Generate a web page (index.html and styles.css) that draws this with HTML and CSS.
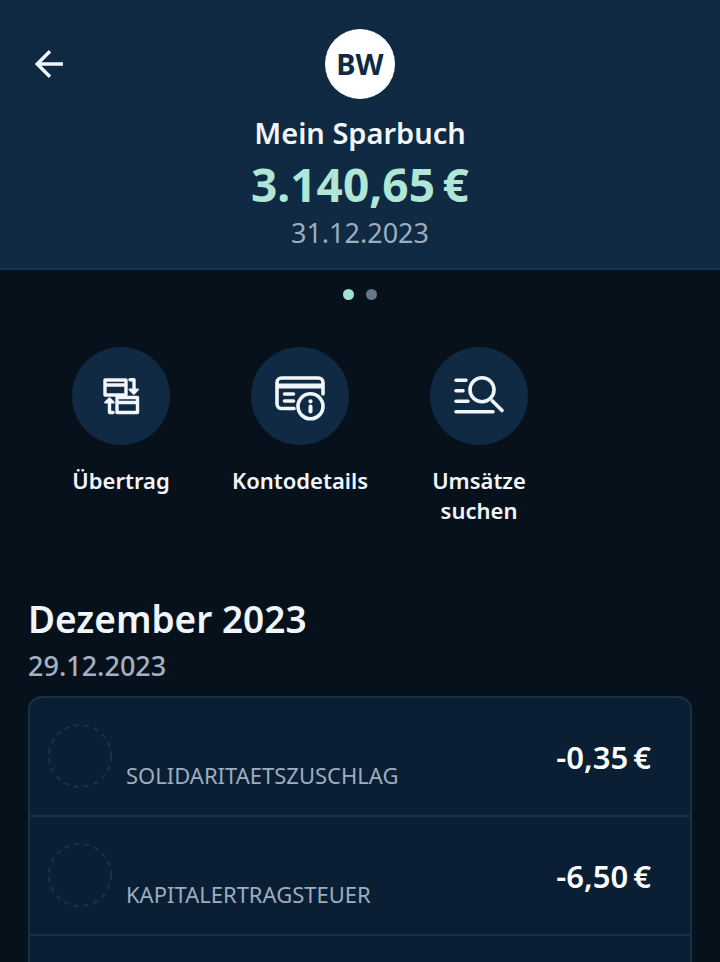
FILE: index.html
```html
<!DOCTYPE html>
<html lang="de">
<head>
<meta charset="utf-8">
<meta name="viewport" content="width=device-width, initial-scale=1">
<title>Mein Sparbuch</title>
<link rel="stylesheet" href="styles.css">
</head>
<body>
<header class="header">
  <button class="back" type="button" aria-label="Zurück">
    <svg width="32" height="32" viewBox="0 0 32 32" fill="none" stroke="currentColor" stroke-width="3.4"><path d="M31 16H6M18 3.200 5.200 16 18 28.800"/></svg>
  </button>
  <div class="account">
    <div class="avatar">BW</div>
    <h1 class="account-name">Mein Sparbuch</h1>
    <div class="balance">3.140,65&#8201;€</div>
    <div class="balance-date">31.12.2023</div>
  </div>
</header>
<main class="main">
  <div class="dots"><span class="dot dot-active"></span><span class="dot"></span></div>
  <nav class="actions">
    <button class="action" type="button">
      <span class="action-icon">
        <svg width="40" height="40" viewBox="0 0 40 40" fill="none" stroke="currentColor" stroke-width="3.4" stroke-linejoin="round" stroke-linecap="round">
          <path d="M4 4h21v15H4zM4 9h21"/>
          <path d="M16 21.500h20.500V36.500H16zM16 26.500h20.500"/>
          <path d="M29 3.800h4V13"/><path d="M12 36.500H8.500V27"/>
          <path d="M28.500 13.500h8.500L32.800 17.800zM4.200 26.500h8.500L8.500 22.200z" fill="currentColor" stroke-width="2"/>
        </svg>
      </span>
      <span class="action-label">Übertrag</span>
    </button>
    <button class="action" type="button">
      <span class="action-icon">
        <svg width="52" height="52" viewBox="0 0 52 52" fill="none" stroke="currentColor" stroke-width="3.600" stroke-linecap="round">
          <path d="M20 38.500H7.500A4.500 4.500 0 0 1 3 34V12.500A4.500 4.500 0 0 1 7.500 8h37a4.500 4.500 0 0 1 4.500 4.500V24"/>
          <path d="M3 16h46" stroke-width="5" stroke-linecap="butt"/>
          <path d="M10.500 24h9M10.500 31h9"/>
          <circle cx="36.500" cy="36.300" r="12.500"/>
          <path d="M36.500 36.500v5" stroke-width="4"/><circle cx="36.500" cy="31.300" r="2.100" fill="currentColor" stroke="none"/>
        </svg>
      </span>
      <span class="action-label">Kontodetails</span>
    </button>
    <button class="action" type="button">
      <span class="action-icon">
        <svg width="52" height="52" viewBox="0 0 52 52" fill="none" stroke="currentColor" stroke-width="3.600" stroke-linecap="round">
          <path d="M3 10.300h10M3 20.800h7M3 31.300h12M3 41.700h37"/>
          <circle cx="29" cy="19.800" r="12"/>
          <path d="m39.500 31 9.500 9.500"/>
        </svg>
      </span>
      <span class="action-label">Umsätze suchen</span>
    </button>
  </nav>
  <section class="month">
    <h2 class="month-title">Dezember 2023</h2>
    <h3 class="day">29.12.2023</h3>
    <ul class="bookings">
      <li class="booking">
        <span class="placeholder"><svg width="64" height="64" viewBox="0 0 64 64"><circle cx="32" cy="32" r="31"/></svg></span>
        <span class="purpose">SOLIDARITAETSZUSCHLAG</span>
        <span class="amount">-0,35&#8201;€</span>
      </li>
      <li class="booking">
        <span class="placeholder"><svg width="64" height="64" viewBox="0 0 64 64"><circle cx="32" cy="32" r="31"/></svg></span>
        <span class="purpose">KAPITALERTRAGSTEUER</span>
        <span class="amount">-6,50&#8201;€</span>
      </li>
    </ul>
  </section>
</main>
</body>
</html>
```
FILE: styles.css
```css
* { box-sizing: border-box; }

body {
  margin: 0;
  min-height: 100vh;
  display: flex;
  flex-direction: column;
  background: #07111b;
  color: #f1f6fd;
  font-family: "Noto Sans", sans-serif;
}

h1, h2, h3, ul { margin: 0; padding: 0; }

button {
  padding: 0;
  border: 0;
  background: none;
  color: inherit;
  font: inherit;
}

.header {
  display: grid;
  grid-template-columns: 48px 1fr 48px;
  padding: 29px 24px 18px;
  background: #102a43;
  border-bottom: 2px solid #17314b;
}

.back {
  width: 48px;
  height: 70px;
  display: flex;
  align-items: center;
  justify-content: center;
}

.account {
  display: flex;
  flex-direction: column;
  align-items: center;
}

.avatar {
  width: 70px;
  height: 70px;
  border-radius: 50%;
  background: #fff;
  color: #102a43;
  font-size: 29px;
  font-weight: 700;
  line-height: 70px;
  text-align: center;
}

.account-name {
  margin-top: 16px;
  font-size: 29px;
  font-weight: 600;
  line-height: 36px;
}

.balance {
  margin-top: 2px;
  color: #afe6d6;
  font-size: 46px;
  font-weight: 700;
  line-height: 62px;
}

.balance-date {
  color: #9dadc0;
  font-size: 27px;
  line-height: 35px;
}

.main {
  flex: 1;
  display: flex;
  flex-direction: column;
}

.dots {
  display: flex;
  justify-content: center;
  gap: 12px;
  padding-top: 19px;
}

.dot {
  width: 11px;
  height: 11px;
  border-radius: 50%;
  background: #66788c;
}

.dot-active { background: #9fe3d0; }

.actions {
  display: flex;
  gap: 29px;
  padding: 47px 46px 0;
}

.action {
  width: 150px;
  display: flex;
  flex-direction: column;
  align-items: center;
  gap: 20px;
}

.action-icon {
  width: 98px;
  height: 98px;
  display: flex;
  align-items: center;
  justify-content: center;
  border-radius: 50%;
  background: #102a43;
}

.action-label {
  max-width: 140px;
  font-size: 22px;
  font-weight: 600;
  line-height: 30px;
}

.month {
  flex: 1;
  display: flex;
  flex-direction: column;
  padding: 68px 28px 0;
}

.month-title {
  font-size: 37px;
  font-weight: 600;
  line-height: 52px;
}

.day {
  color: #a3b1c2;
  font-size: 27px;
  font-weight: 500;
  line-height: 42px;
}

.bookings {
  flex: 1;
  margin-top: 9px;
  border: 2px solid #17314b;
  border-bottom: 0;
  border-radius: 14px 14px 0 0;
  background: #0a1f33;
  list-style: none;
}

.booking {
  height: 119px;
  display: flex;
  align-items: center;
  gap: 14px;
  padding: 0 39px 2px 18px;
  border-bottom: 2px solid #17314b;
}

.placeholder { height: 64px; }

.placeholder circle {
  fill: none;
  stroke: #1b3349;
  stroke-width: 2;
  stroke-dasharray: 5 5;
}

.purpose {
  flex: 1;
  padding-top: 38px;
  color: #9dadc0;
  font-size: 22px;
  line-height: 30px;
}

.amount {
  padding-top: 2px;
  color: #fff;
  font-size: 31px;
  font-weight: 600;
  line-height: 36px;
}
```
